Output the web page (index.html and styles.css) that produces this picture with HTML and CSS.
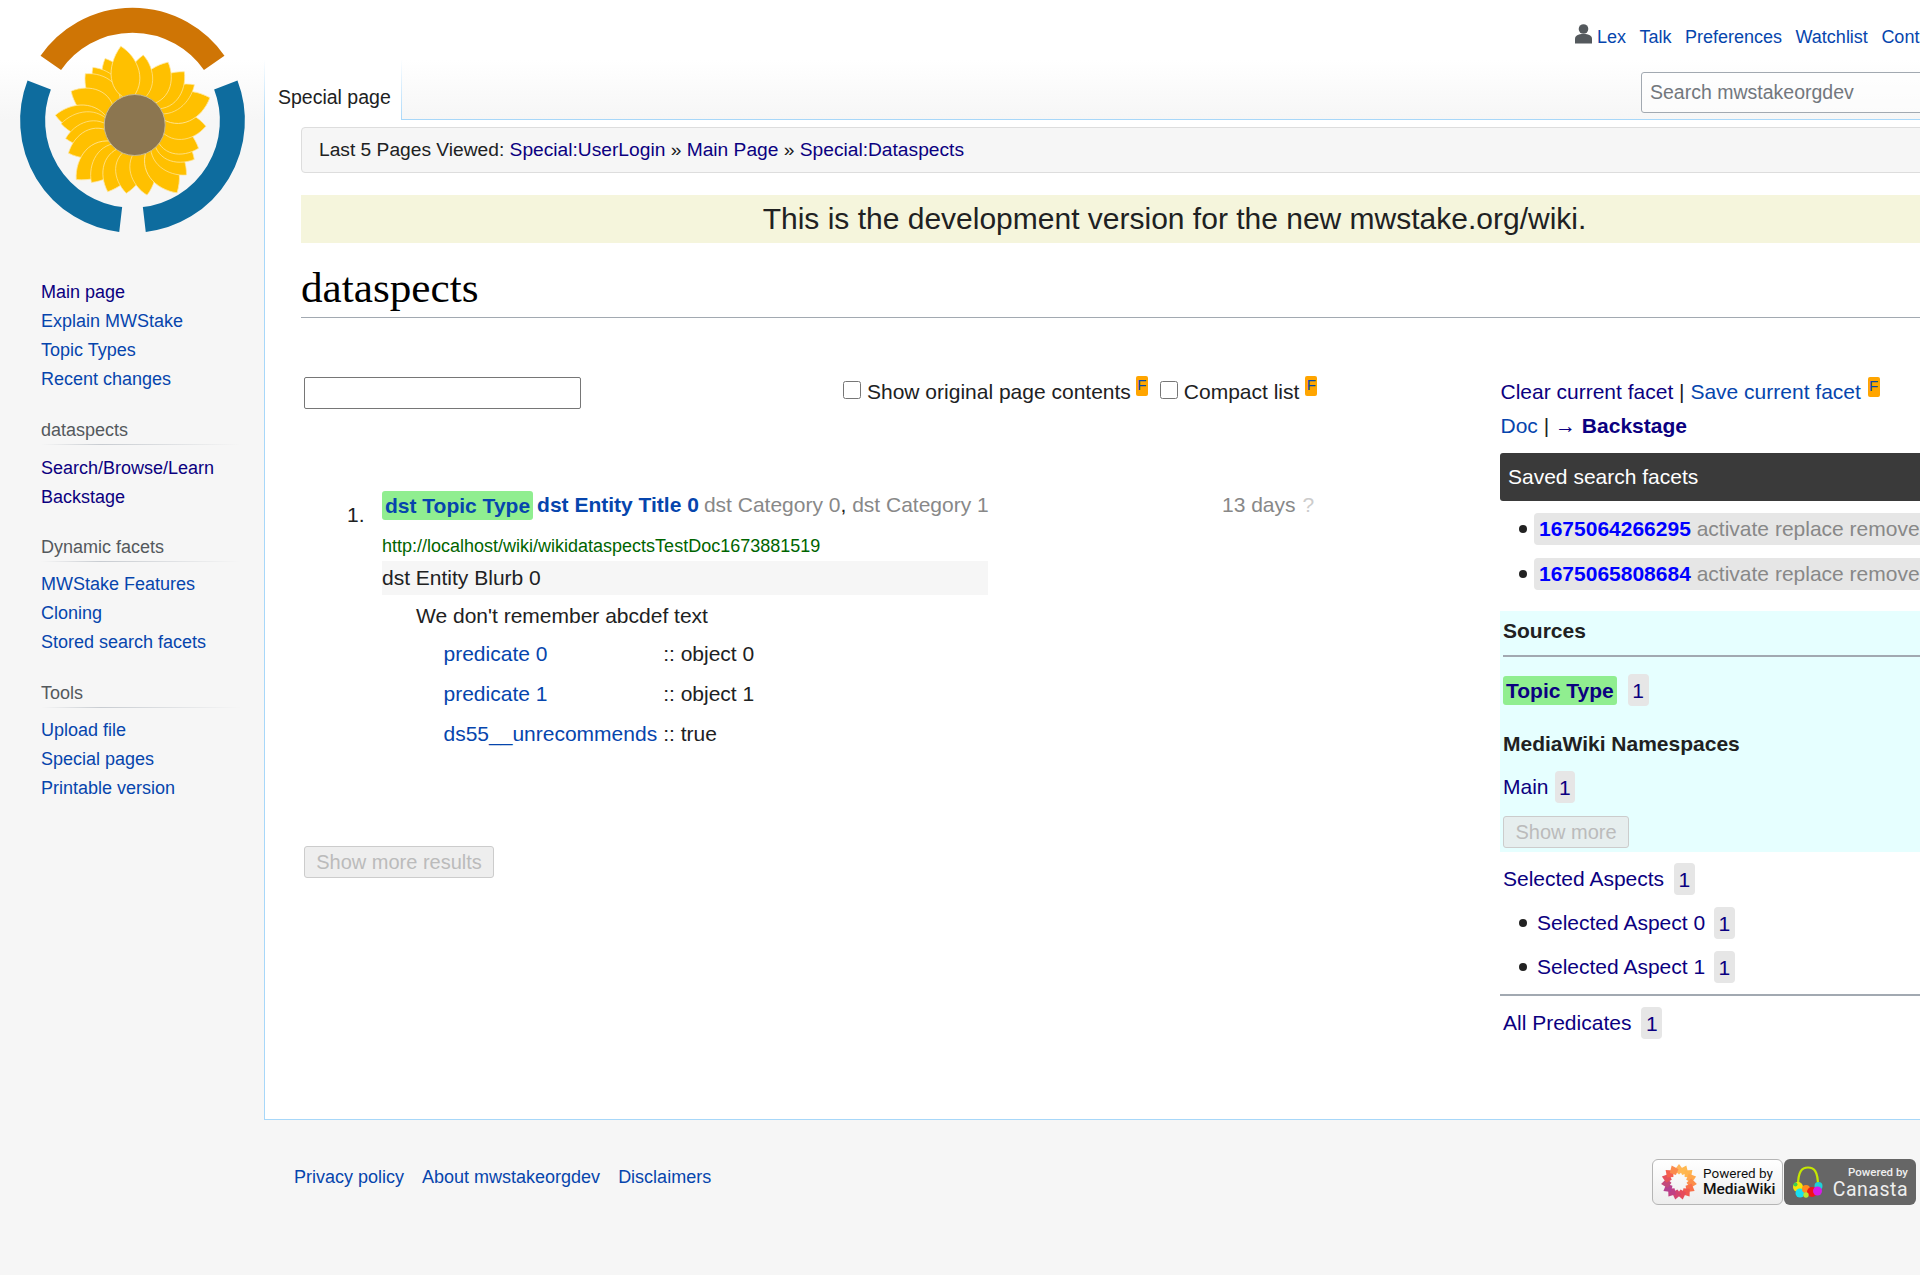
FILE: index.html
```html
<!DOCTYPE html>
<html lang="en">
<head>
    <meta charset="UTF-8">
    <meta name="viewport" content="width=device-width, initial-scale=1.0">
    <title>dataspects - mwstakeorgdev</title>
    <link rel="stylesheet" href="styles.css">
</head>
<body>

<div class="page">

    <aside class="sidebar">
        <svg class="logo" width="264" height="250" viewBox="0 0 264 250">
            <defs>
                <path id="petal" d="M0 -25 C-19 -36 -17 -62 0 -80 C14 -66 19 -40 0 -25Z"/>
            </defs>
            <path d="M50.8 62.8 A99.6 99.6 0 0 1 214.2 62.8" fill="none" stroke="#cf7505" stroke-width="25"/>
            <path d="M39.2 85 A99.6 99.6 0 0 0 120.7 219.5" fill="none" stroke="#0e6c9e" stroke-width="25"/>
            <path d="M225.8 85 A99.6 99.6 0 0 1 144.3 219.5" fill="none" stroke="#0e6c9e" stroke-width="25"/>
            <g transform="translate(134.7 125)" fill="#ffc000" stroke="#ffe7a0" stroke-width="0.7">
                <use href="#petal" transform="rotate(336) scale(1 .91)"/>
                <use href="#petal" transform="rotate(324) scale(1 .89)"/>
                <use href="#petal" transform="rotate(316) scale(1.1 .89)"/>
                <use href="#petal" transform="rotate(298) scale(1.1 .9)"/>
                <use href="#petal" transform="rotate(277) scale(1.1 1)"/>
                <use href="#petal" transform="rotate(271) scale(1 .92)"/>
                <use href="#petal" transform="rotate(259) scale(1 .88)"/>
                <use href="#petal" transform="rotate(247) scale(1.1 .9)"/>
                <use href="#petal" transform="rotate(227) scale(1.2 1)"/>
                <use href="#petal" transform="rotate(217) scale(1 .9)"/>
                <use href="#petal" transform="rotate(202) scale(1.1 .9)"/>
                <use href="#petal" transform="rotate(187) scale(1.1 .86)"/>
                <use href="#petal" transform="rotate(170) scale(1 .89)"/>
                <use href="#petal" transform="rotate(148) scale(1.2 1)"/>
                <use href="#petal" transform="rotate(134) scale(1 .9)"/>
                <use href="#petal" transform="rotate(120) scale(1.1 .86)"/>
                <use href="#petal" transform="rotate(110) scale(1.1 .85)"/>
                <use href="#petal" transform="rotate(91) scale(1.1 .89)"/>
                <use href="#petal" transform="rotate(70) scale(1.2 1)"/>
                <use href="#petal" transform="rotate(56) scale(.9 .9)"/>
                <use href="#petal" transform="rotate(43) scale(1.1 .91)"/>
                <use href="#petal" transform="rotate(28) scale(1.1 .89)"/>
                <use href="#petal" transform="rotate(7) scale(1 .88)"/>
                <use href="#petal" transform="rotate(-10) scale(1.1 1)"/>
            </g>
            <circle cx="134.7" cy="125" r="30.5" fill="#8c7650" stroke="#c8b98e" stroke-width="1"/>
        </svg>

        <nav class="portal first">
            <ul>
                <li><a class="visited" href="#">Main page</a></li>
                <li><a href="#">Explain MWStake</a></li>
                <li><a href="#">Topic Types</a></li>
                <li><a href="#">Recent changes</a></li>
            </ul>
        </nav>
        <nav class="portal">
            <h3>dataspects</h3>
            <ul>
                <li><a class="visited" href="#">Search/Browse/Learn</a></li>
                <li><a class="visited" href="#">Backstage</a></li>
            </ul>
        </nav>
        <nav class="portal">
            <h3>Dynamic facets</h3>
            <ul>
                <li><a href="#">MWStake Features</a></li>
                <li><a href="#">Cloning</a></li>
                <li><a href="#">Stored search facets</a></li>
            </ul>
        </nav>
        <nav class="portal">
            <h3>Tools</h3>
            <ul>
                <li><a href="#">Upload file</a></li>
                <li><a href="#">Special pages</a></li>
                <li><a href="#">Printable version</a></li>
            </ul>
        </nav>
    </aside>

    <div class="main">
        <header class="head">
            <ul class="personal">
                <li class="user">
                    <svg width="17" height="20" viewBox="0 0 17 20">
                        <circle cx="8.5" cy="5" r="4.8" fill="#54595d"/>
                        <path d="M0 19.5 V15 C0 11.5 3 10 8.5 10 C14 10 17 11.5 17 15 V19.5Z" fill="#54595d"/>
                    </svg>
                    <a href="#">Lex</a>
                </li>
                <li><a href="#">Talk</a></li>
                <li><a href="#">Preferences</a></li>
                <li><a href="#">Watchlist</a></li>
                <li><a href="#">Contributions</a></li>
                <li><a href="#">Log out</a></li>
            </ul>
            <div class="tabbar">
                <div class="tab">Special page</div>
                <input class="wiki-search" type="text" placeholder="Search mwstakeorgdev">
            </div>
        </header>

        <main class="content">
            <div class="trail">
                Last 5 Pages Viewed: <a class="visited" href="#">Special:UserLogin</a> &raquo;
                <a class="visited" href="#">Main Page</a> &raquo;
                <a class="visited" href="#">Special:Dataspects</a>
            </div>
            <div class="notice">This is the development version for the new mwstake.org/wiki.</div>
            <h1>dataspects</h1>

            <div class="columns">
                <section class="results">
                    <div class="search-row">
                        <input class="facet-search" type="text">
                        <label class="toggle first-toggle"><input type="checkbox"> Show original page contents</label>
                        <a class="flag" href="#">F</a>
                        <label class="toggle"><input type="checkbox"> Compact list</label>
                        <a class="flag" href="#">F</a>
                    </div>

                    <div class="hit">
                        <span class="hit-num">1.</span>
                        <div class="hit-body">
                            <div class="hit-title">
                                <a class="tag" href="#">dst Topic Type</a>
                                <a class="title-link" href="#">dst Entity Title 0</a>
                                <span class="cats"><span class="gray">dst Category 0</span>, <span class="gray">dst Category 1</span></span>
                                <span class="age">13 days <span class="qmark">?</span></span>
                            </div>
                            <div class="hit-url">http://localhost/wiki/wikidataspectsTestDoc1673881519</div>
                            <div class="blurb">dst Entity Blurb 0</div>
                            <div class="hit-note">We don't remember abcdef text</div>
                            <table class="preds">
                                <tr><td><a href="#">predicate 0</a></td><td>:: object 0</td></tr>
                                <tr><td><a href="#">predicate 1</a></td><td>:: object 1</td></tr>
                                <tr><td><a href="#">ds55__unrecommends</a></td><td>:: true</td></tr>
                            </table>
                        </div>
                    </div>

                    <button class="btn more-results" disabled>Show more results</button>
                </section>

                <section class="facets">
                    <div class="facet-line">
                        <a class="visited" href="#">Clear current facet</a> <span class="sep">|</span>
                        <a href="#">Save current facet</a> <a class="flag" href="#">F</a>
                    </div>
                    <div class="facet-line">
                        <a href="#">Doc</a> <span class="sep">|</span> <span class="arrow">&rarr;</span>
                        <a class="visited strong" href="#">Backstage</a>
                    </div>
                    <div class="saved-head">Saved search facets</div>
                    <ul class="saved">
                        <li><span class="saved-item"><a href="#">1675064266295</a> activate replace remove</span></li>
                        <li><span class="saved-item"><a href="#">1675065808684</a> activate replace remove</span></li>
                    </ul>

                    <div class="sources">
                        <div class="sources-title">Sources</div>
                        <div class="facet-row topic-row"><a class="tag small visited" href="#">Topic Type</a><span class="count">1</span></div>
                        <div class="ns-title">MediaWiki Namespaces</div>
                        <div class="facet-row main-row"><a class="visited" href="#">Main</a><span class="count near">1</span></div>
                        <button class="btn show-more" disabled>Show more</button>
                    </div>

                    <div class="facet-row aspects"><a class="visited" href="#">Selected Aspects</a><span class="count">1</span></div>
                    <ul class="aspect-list">
                        <li><a class="visited" href="#">Selected Aspect 0</a><span class="count">1</span></li>
                        <li><a class="visited" href="#">Selected Aspect 1</a><span class="count">1</span></li>
                    </ul>
                    <div class="facet-row all-preds"><a class="visited" href="#">All Predicates</a><span class="count">1</span></div>
                </section>
            </div>
        </main>

        <footer class="foot">
            <ul class="foot-links">
                <li><a href="#">Privacy policy</a></li>
                <li><a href="#">About mwstakeorgdev</a></li>
                <li><a href="#">Disclaimers</a></li>
            </ul>
            <div class="badges">
                <div class="badge mw">
                    <svg width="38" height="38" viewBox="-19 -19 38 38">
                        <defs>
                            <path id="mwpetal" d="M0 -8 L-5 -12.500 L0 -19 L5 -12.500Z"/>
                        </defs>
                        <use href="#mwpetal" fill="#ffb45a" transform="rotate(0)"/>
                        <use href="#mwpetal" fill="#ffb950" transform="rotate(24)"/>
                        <use href="#mwpetal" fill="#ffb54e" transform="rotate(48)"/>
                        <use href="#mwpetal" fill="#ffa74c" transform="rotate(72)"/>
                        <use href="#mwpetal" fill="#fc8d4a" transform="rotate(96)"/>
                        <use href="#mwpetal" fill="#f8704a" transform="rotate(120)"/>
                        <use href="#mwpetal" fill="#f0584f" transform="rotate(144)"/>
                        <use href="#mwpetal" fill="#e64a5a" transform="rotate(168)"/>
                        <use href="#mwpetal" fill="#d44470" transform="rotate(192)"/>
                        <use href="#mwpetal" fill="#c04084" transform="rotate(216)"/>
                        <use href="#mwpetal" fill="#b54290" transform="rotate(240)"/>
                        <use href="#mwpetal" fill="#c24a7c" transform="rotate(264)"/>
                        <use href="#mwpetal" fill="#e4525c" transform="rotate(288)"/>
                        <use href="#mwpetal" fill="#f5604e" transform="rotate(312)"/>
                        <use href="#mwpetal" fill="#fb8a4c" transform="rotate(336)"/>
                    </svg>
                    <div class="badge-text">
                        <span class="by">Powered by</span>
                        <span class="name">MediaWiki</span>
                    </div>
                </div>
                <div class="badge canasta">
                    <svg width="30" height="33" viewBox="0 0 30 33">
                        <path d="M5 20 C5 5 9 1.500 15 1.500 C21 1.500 25 5 25 20" fill="none" stroke="#c6e800" stroke-width="2.200"/>
                        <circle cx="5" cy="21" r="5" fill="#f5e50a"/>
                        <circle cx="25.500" cy="20" r="4" fill="#1fd0d8"/>
                        <circle cx="7" cy="27" r="4.500" fill="#19e0f0"/>
                        <circle cx="13" cy="23" r="4" fill="#ff8a1e"/>
                        <circle cx="19" cy="26" r="5" fill="#f01616"/>
                        <circle cx="24.500" cy="25" r="4.500" fill="#d61ce8"/>
                        <circle cx="13" cy="29" r="2.700" fill="#b8e830"/>
                        <circle cx="2.500" cy="18.500" r="2" fill="#3fd050"/>
                    </svg>
                    <div class="badge-text right">
                        <span class="by">Powered by</span>
                        <span class="name">Canasta</span>
                    </div>
                </div>
            </div>
        </footer>
    </div>

</div>

</body>
</html>
```
FILE: styles.css
```css
body {
    margin: 0;
    height: 1275px;
    overflow: hidden;
    font-family: "Liberation Sans", Arial, sans-serif;
    color: #202122;
    background-color: #f6f6f6;
}

a {
    color: #0645ad;
    text-decoration: none;
}

a.visited {
    color: #0b0080;
}

ul {
    list-style: none;
    margin: 0;
    padding: 0;
}

.page {
    width: 2084px;
    display: grid;
    grid-template-columns: 264px 1fr;
    background: linear-gradient(#fff 60px, #f6f6f6 120px) no-repeat;
    background-size: 100% 120px;
}

/* sidebar */
.logo {
    display: block;
}

.portal {
    padding-left: 41px;
    margin-bottom: 21.3px;
    font-size: 18px;
}

.portal.first {
    margin-top: 28px;
    margin-bottom: 22px;
}

.portal h3 {
    margin: 0 0 8.5px;
    height: 29px;
    width: 200px;
    font-size: 18px;
    font-weight: normal;
    line-height: 28px;
    color: #54595d;
    background: linear-gradient(to right, #f6f6f6, #c8ccd1 30%, #f6f6f6) no-repeat bottom;
    background-size: 100% 1px;
}

.portal li {
    height: 29px;
    line-height: 28.8px;
}

/* head */
.head {
    height: 120px;
    display: flex;
    flex-direction: column;
}

.personal {
    height: 60px;
    padding: 14px 23px 0 0;
    box-sizing: border-box;
    display: flex;
    justify-content: flex-end;
    align-items: center;
    gap: 13.5px;
    font-size: 18px;
}

.user {
    display: flex;
    align-items: center;
    gap: 5px;
}

.user svg {
    margin-top: -7px;
}

.tabbar {
    height: 60px;
    display: flex;
    justify-content: space-between;
}

.tab {
    position: relative;
    z-index: 1;
    height: 60px;
    box-sizing: border-box;
    padding: 24px 10.5px 0 13px;
    background-color: #fff;
    font-size: 19.5px;
    line-height: 26px;
    border-style: solid;
    border-width: 0 1px;
    border-image: linear-gradient(to top, #a7d7f9, #fff) 1;
}

.wiki-search {
    width: 418px;
    height: 41px;
    margin: 12px 25px 0 0;
    padding: 0 8px;
    box-sizing: border-box;
    border: 1px solid #a2a9b1;
    border-radius: 3px;
    background-color: rgba(255, 255, 255, 0.5);
    font-family: inherit;
    font-size: 19.5px;
}

.wiki-search::placeholder {
    color: #72777d;
}

/* content */
.content {
    height: 1001px;
    box-sizing: border-box;
    margin-top: -1px;
    padding: 7px 36px 0 36px;
    background-color: #fff;
    border: 1px solid #a7d7f9;
    border-right: 0;
    font-size: 21px;
}

.trail {
    height: 46px;
    box-sizing: border-box;
    padding-left: 17px;
    border: 1px solid #ddd;
    border-radius: 4px;
    background-color: #f6f6f6;
    font-size: 19.2px;
    line-height: 44px;
}

.notice {
    height: 48px;
    margin-top: 22px;
    background-color: #f5f5dc;
    text-align: center;
    font-size: 30px;
    line-height: 48px;
}

h1 {
    margin: 17px 0 0;
    height: 57px;
    border-bottom: 1px solid #a2a9b1;
    font-family: "Liberation Serif", "Times New Roman", serif;
    font-size: 43.2px;
    font-weight: normal;
    line-height: 55px;
    color: #000;
}

.columns {
    display: grid;
    grid-template-columns: 1199px 1fr;
}

/* left column */
.search-row {
    display: flex;
    align-items: flex-start;
    height: 32px;
    margin-top: 59px;
    padding-left: 3px;
    line-height: 30px;
}

.facet-search {
    width: 277px;
    height: 32px;
    box-sizing: border-box;
    border: 1px solid #767676;
    border-radius: 2px;
    background-color: #fff;
}

.toggle {
    margin-left: 12px;
    display: flex;
    align-items: center;
    gap: 6px;
    white-space: nowrap;
}

.toggle input {
    width: 18px;
    height: 18px;
    margin: -5px 0 0;
}

.first-toggle {
    margin-left: 262px;
}

.flag {
    flex: none;
    width: 12px;
    height: 20px;
    margin: -1px 0 0 5px;
    border-radius: 2px;
    background-color: #ffa500;
    font-size: 15px;
    line-height: 18px;
    text-align: center;
}

.search-row .flag:last-child {
    margin-left: 6px;
}

.facet-line .flag {
    display: inline-block;
    vertical-align: 8px;
    margin: 0 0 0 1px;
}

.hit {
    display: flex;
    margin-top: 80px;
}

.hit-num {
    width: 35px;
    margin-left: 46px;
    margin-top: 10px;
    line-height: 32px;
}

.hit-body {
    width: 606px;
}

.hit-title {
    display: flex;
    align-items: center;
    height: 32px;
    white-space: nowrap;
    position: relative;
}

.tag {
    padding: 0 3px;
    height: 29px;
    border-radius: 3px;
    background-color: #90ee90;
    font-weight: bold;
    line-height: 29px;
}

.title-link {
    margin-left: 4px;
    font-weight: bold;
}

.cats {
    margin-left: 5px;
}

.gray {
    color: #888;
}

.age {
    position: absolute;
    left: 840px;
    color: #888;
}

.qmark {
    margin-left: 1px;
    color: #ccc;
}

.hit-url {
    margin-top: 14px;
    height: 23px;
    font-size: 18px;
    line-height: 23px;
    color: #006400;
    white-space: nowrap;
}

.blurb {
    margin-top: 3px;
    height: 34px;
    background-color: #f6f6f6;
    line-height: 34px;
}

.hit-note {
    margin: 4px 0 0 34px;
    height: 34px;
    line-height: 34px;
}

.preds {
    margin: 1px 0 0 61.5px;
    border-collapse: collapse;
    white-space: nowrap;
}

.preds td {
    height: 40px;
    padding: 0 6px 0 0;
}

.btn {
    height: 33px;
    padding: 0;
    border: 1px solid #ccc;
    border-radius: 3px;
    background-color: #eee;
    color: #bbb;
    font-family: inherit;
    font-size: 20px;
}

.more-results {
    display: block;
    width: 190px;
    height: 32px;
    margin: 92px 0 0 3px;
}

/* right column */
.facets {
    padding-top: 57px;
}

.facet-line {
    height: 34px;
    padding-left: 0.5px;
    line-height: 34px;
    white-space: nowrap;
}

.strong {
    font-weight: bold;
}

.arrow {
    color: #0b0080;
    font-size: 21px;
}

.saved-head {
    height: 48px;
    margin-top: 10px;
    padding-left: 8px;
    border-radius: 3px;
    background-color: #3a3a3a;
    color: #fff;
    line-height: 47px;
}

.saved {
    margin-top: 12px;
}

.saved li {
    display: flex;
    align-items: center;
    height: 32px;
    margin-bottom: 13px;
}

.saved li::before,
.aspect-list li::before {
    content: "";
    flex: none;
    width: 8px;
    height: 8px;
    margin: 0 7px 0 19px;
    border-radius: 50%;
    background-color: #222;
}

.saved-item {
    flex: 1;
    height: 32px;
    padding-left: 5px;
    border-radius: 4px;
    background-color: #e6e6e6;
    color: #888;
    line-height: 32px;
    white-space: nowrap;
}

.saved-item a {
    color: #00f;
    font-weight: bold;
}

.sources {
    height: 241px;
    margin-top: 21px;
    padding: 0 0 0 3px;
    background-color: #e6ffff;
}

.sources-title {
    height: 44px;
    border-bottom: 2px solid #a2a9b1;
    font-weight: bold;
    line-height: 40px;
}

.facet-row {
    display: flex;
    align-items: center;
    height: 32px;
    white-space: nowrap;
}

.topic-row {
    margin-top: 17px;
}

.tag.small {
    color: #0b0080;
}

.count {
    display: inline-block;
    height: 32px;
    margin-left: 9.8px;
    padding: 0 4.7px;
    border-radius: 4px;
    background-color: #e6e6e6;
    color: #0b0080;
    line-height: 33px;
}

.topic-row .count {
    margin-left: 10.8px;
}

.count.near {
    margin-left: 6px;
    padding: 0 4.5px;
}

.ns-title {
    margin-top: 22px;
    height: 32px;
    font-weight: bold;
    line-height: 32px;
}

.main-row {
    margin-top: 11px;
}

.sources .facet-row + .btn {
    margin-top: 13px;
}

.show-more {
    display: block;
    width: 126px;
    height: 32px;
    background-color: #e6eeee;
}

.aspects {
    margin: 11px 0 0 3px;
}

.aspect-list {
    margin-top: 12px;
}

.aspect-list li {
    display: flex;
    align-items: center;
    height: 32px;
    margin-bottom: 12px;
}

.aspect-list li::before {
    margin-right: 10px;
}

.aspect-list .count {
    margin-left: 8.8px;
}

.all-preds {
    padding: 11px 0 0 3px;
    border-top: 2px solid #a2a9b1;
    height: 32px;
    margin-top: -1px;
}

/* footer */
.foot {
    display: flex;
    justify-content: space-between;
    padding: 39px 168px 0 30px;
}

.foot-links {
    display: flex;
    gap: 18px;
    font-size: 18px;
    line-height: 36px;
}

.badges {
    display: flex;
    gap: 1px;
}

.badge {
    display: flex;
    align-items: center;
    width: 131px;
    height: 46px;
    box-sizing: border-box;
    border-radius: 6px;
}

.mw {
    padding-left: 8px;
    gap: 8px;
    border: 1px solid #b5b5b5;
    background: linear-gradient(#fff, #ededed);
    color: #111;
}

.mw svg {
    flex: none;
    width: 36px;
    height: 36px;
    margin-right: -2px;
}

.canasta {
    width: 132px;
    padding: 0 8px 0 9px;
    justify-content: space-between;
    background-color: #666;
    color: #eee;
}

.badge-text {
    display: flex;
    flex-direction: column;
    white-space: nowrap;
    font-family: Roboto, "Liberation Sans", sans-serif;
}

.badge-text.right {
    align-items: flex-end;
}

.by {
    font-size: 13.500px;
    line-height: 14px;
}

.name {
    font-size: 15.5px;
    line-height: 18px;
    font-weight: 500;
}

.canasta .by {
    font-size: 11.5px;
    font-weight: 500;
}

.canasta .name {
    font-size: 19.5px;
    line-height: 21px;
    font-weight: 400;
    letter-spacing: 0.5px;
}
```
